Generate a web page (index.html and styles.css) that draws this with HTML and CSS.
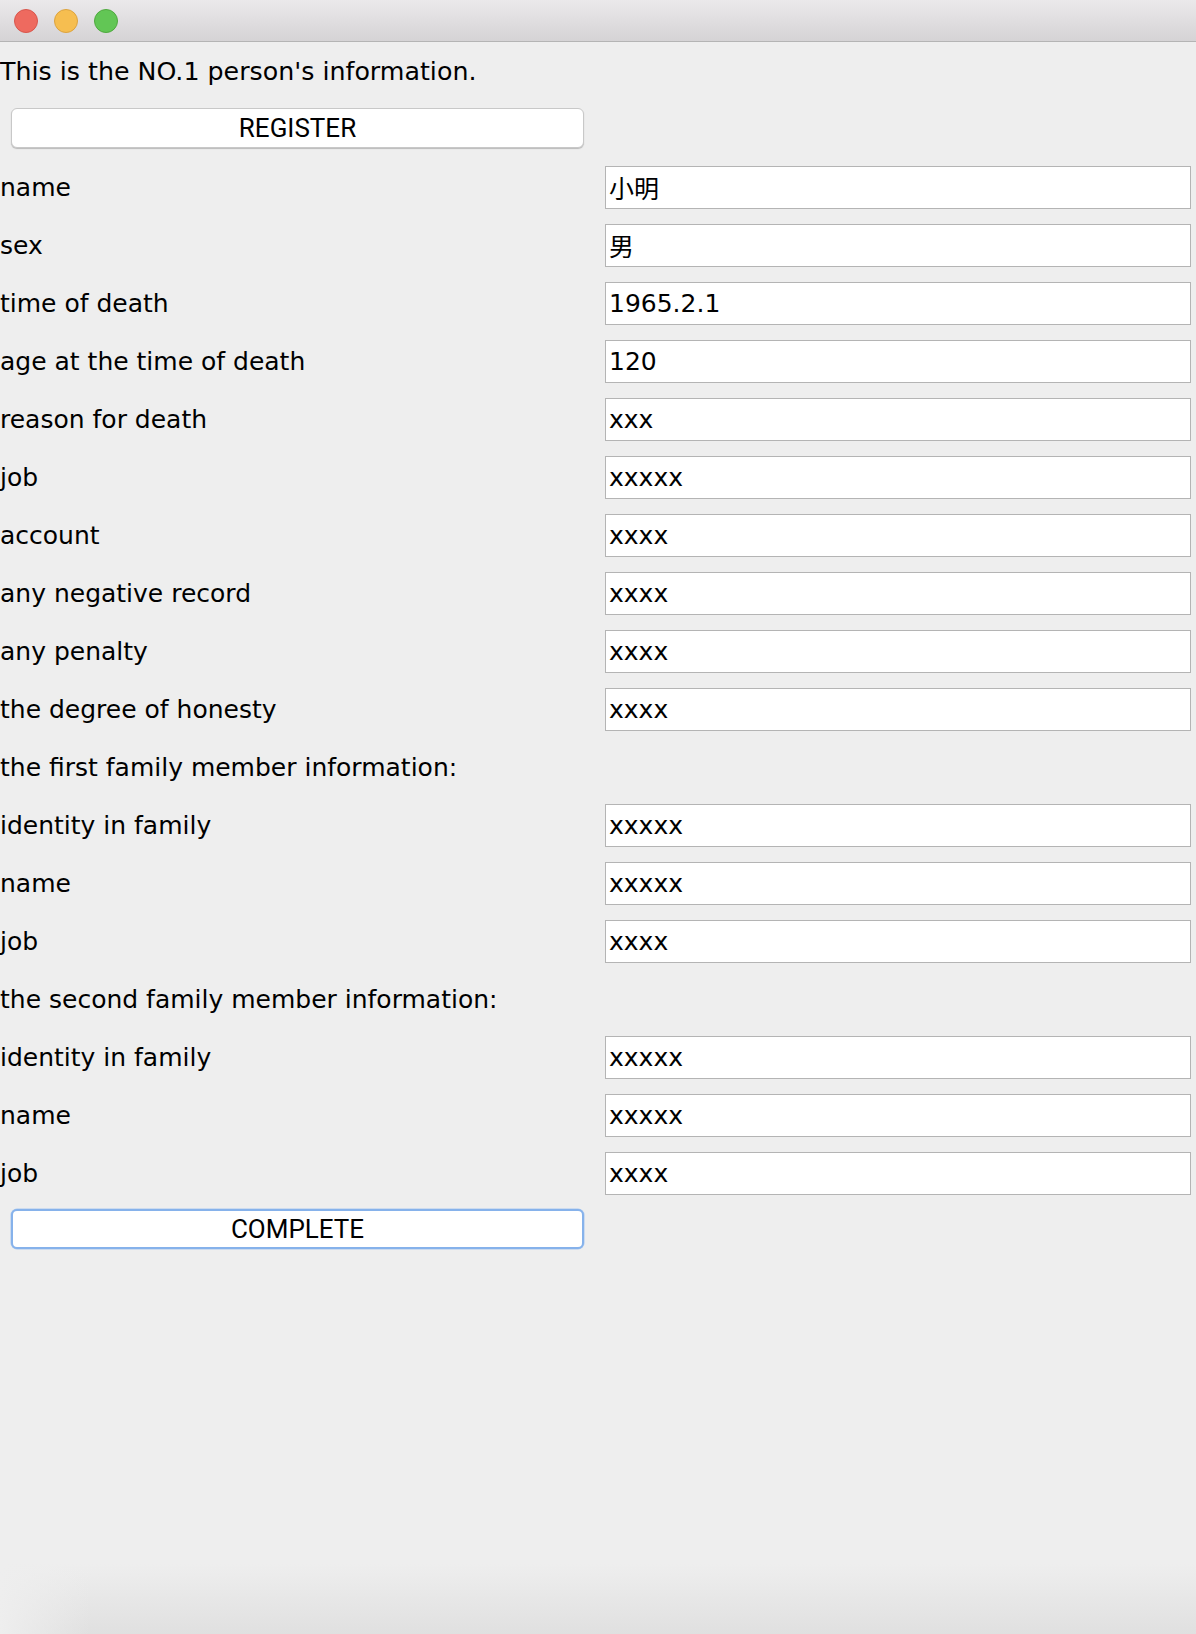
FILE: index.html
```html
<!DOCTYPE html>
<html lang="en">
<head>
<meta charset="utf-8">
<title>Person information</title>
<link rel="stylesheet" href="styles.css">
</head>
<body>
<div class="window">
  <div class="titlebar">
    <span class="light red"></span>
    <span class="light yellow"></span>
    <span class="light green"></span>
  </div>
  <div class="form">
    <div class="label header">This is the NO.1 person's information.</div>
    <div class="cell"></div>

    <div class="cell"><button class="btn">REGISTER</button></div>
    <div class="cell"></div>

    <div class="label">name</div><div class="cell"><input class="field" value="小明"></div>
    <div class="label">sex</div><div class="cell"><input class="field" value="男"></div>
    <div class="label">time of death</div><div class="cell"><input class="field" value="1965.2.1"></div>
    <div class="label">age at the time of death</div><div class="cell"><input class="field" value="120"></div>
    <div class="label">reason for death</div><div class="cell"><input class="field" value="xxx"></div>
    <div class="label">job</div><div class="cell"><input class="field" value="xxxxx"></div>
    <div class="label">account</div><div class="cell"><input class="field" value="xxxx"></div>
    <div class="label">any negative record</div><div class="cell"><input class="field" value="xxxx"></div>
    <div class="label">any penalty</div><div class="cell"><input class="field" value="xxxx"></div>
    <div class="label">the degree of honesty</div><div class="cell"><input class="field" value="xxxx"></div>

    <div class="label">the first family member information:</div><div class="cell"></div>
    <div class="label">identity in family</div><div class="cell"><input class="field" value="xxxxx"></div>
    <div class="label">name</div><div class="cell"><input class="field" value="xxxxx"></div>
    <div class="label">job</div><div class="cell"><input class="field" value="xxxx"></div>

    <div class="label">the second family member information:</div><div class="cell"></div>
    <div class="label">identity in family</div><div class="cell"><input class="field" value="xxxxx"></div>
    <div class="label">name</div><div class="cell"><input class="field" value="xxxxx"></div>
    <div class="label">job</div><div class="cell"><input class="field" value="xxxx"></div>

    <div class="cell"><button class="btn focused">COMPLETE</button></div>
    <div class="cell"></div>
  </div>
</div>
</body>
</html>
```

FILE: styles.css
```css
html, body {
  margin: 0;
  padding: 0;
}

body {
  background: #eeeeee;
  font-family: "DejaVu Sans", "Noto Sans CJK SC", sans-serif;
  color: #000000;
}

.window {
  min-height: 100vh;
  display: flex;
  flex-direction: column;
  background:
    linear-gradient(to right, #eeeeee 0px, rgba(238, 238, 238, 0) 90px) left bottom / 90px 70px no-repeat,
    linear-gradient(to bottom, #eeeeee 0, #eeeeee calc(100% - 70px), #e0e0e0 100%);
}

.titlebar {
  height: 41px;
  border-bottom: 1px solid #b4b4b4;
  background: linear-gradient(to bottom, #ebe9eb 0%, #d5d3d5 100%);
  display: flex;
  align-items: center;
  gap: 16px;
  padding-left: 14px;
}

.light {
  width: 22px;
  height: 22px;
  border-radius: 50%;
  border: 1px solid transparent;
}

.light.red {
  background: #ee6a5f;
  border-color: #d8564c;
}

.light.yellow {
  background: #f6be50;
  border-color: #dca33f;
}

.light.green {
  background: #62c655;
  border-color: #4fa93f;
}

.form {
  display: grid;
  grid-template-columns: 598px 598px;
  grid-auto-rows: 58px;
  align-items: center;
}

.label {
  font-size: 25px;
  white-space: nowrap;
  line-height: normal;
}

.header {
  font-size: 25.3px;
}

.cell {
  display: flex;
  align-items: center;
  height: 58px;
}

.field {
  box-sizing: border-box;
  width: 586px;
  height: 43px;
  margin: 0 0 0 7px;
  padding: 0 3px;
  border: 1px solid #b4b4b4;
  border-radius: 0;
  background: #ffffff;
  font-family: "DejaVu Sans", "Noto Sans CJK SC", sans-serif;
  font-size: 25px;
  color: #000000;
  outline: none;
}

.btn {
  box-sizing: border-box;
  width: 573px;
  height: 40px;
  margin: 0 0 3px 11px;
  padding: 0;
  border: 1px solid #c8c8c8;
  border-radius: 6px;
  background: #ffffff;
  box-shadow: 0 1px 1px rgba(0, 0, 0, 0.22);
  font-family: Roboto, "DejaVu Sans", sans-serif;
  font-size: 26px;
  color: #000000;
  text-align: center;
}

.btn.focused {
  border: 2px solid #86b2eb;
  box-shadow: 0 0 0 0.5px #a9c8f0;
  margin-bottom: 4px;
}
```
